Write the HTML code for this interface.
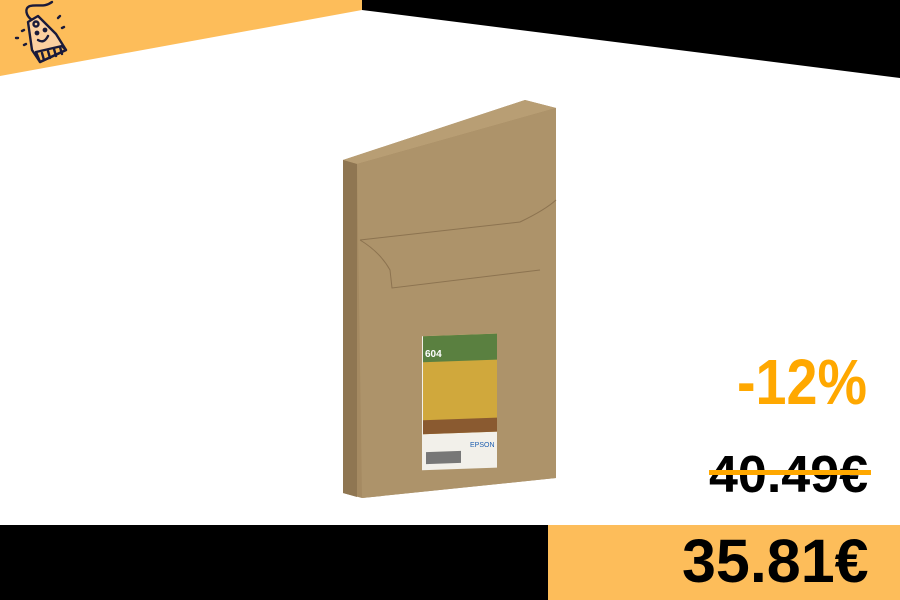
<!DOCTYPE html>
<html><head><style>
body{margin:0;width:900px;height:600px;overflow:hidden;background:#fff;position:relative;font-family:"Liberation Sans",sans-serif}
.t{position:absolute;font-weight:bold;white-space:nowrap;line-height:1;transform-origin:0 0}
</style></head><body>
<svg width="900" height="600" style="position:absolute;left:0;top:0">
<polygon points="0,0 362,0 362,10 0,76" fill="#fdbd5a"/>
<polygon points="362,0 900,0 900,78 362,10" fill="#000"/>
<rect x="0" y="525" width="548" height="75" fill="#000"/>
<rect x="548" y="525" width="352" height="75" fill="#fdbd5a"/>
<g fill="none" stroke="#1a1a3a" stroke-width="2.4" stroke-linecap="round" stroke-linejoin="round">
<path d="M52,2 C44,8 38,4 30,6 C24,8 26,16 32,20"/>
<path d="M28,22 L38,16 L56,34 L66,50 L40,62 L32,50 Z" fill="#fcd0a0"/>
<path d="M36,52 L62,46 L66,50 L40,62 Z" fill="#fdbd5a"/>
<path d="M42,53 L44,60 M48,51 L50,58 M54,49 L56,56 M60,47 L62,54"/>
<circle cx="36" cy="24" r="2.5"/>
<circle cx="37" cy="33" r="1.2" fill="#1a1a3a"/>
<circle cx="45" cy="30" r="1.2" fill="#1a1a3a"/>
<path d="M38,40 Q44,44 48,36"/>
<path d="M24,30 L22,31 M26,44 L24,45 M58,18 L60,16 M62,28 L64,27 M18,38 L16,38"/>
</g>
<polygon points="343,160 525,100 556,108 556,478 362,498 343,493" fill="#a58a62"/>
<polygon points="343,160 525,100 556,108 357,164" fill="#b89e74"/>
<polygon points="343,160 357,164 357,497 343,493" fill="#8f7652"/>
<polygon points="357,164 556,108 556,478 362,498" fill="#ad936a"/>
<path d="M360,240 L520,222 Q545,210 556,200 M360,240 Q380,252 390,270 L392,288 L540,270" fill="none" stroke="#8c7350" stroke-width="1"/>
<g transform="translate(0,15) skewY(-2)">
<rect x="422" y="336" width="75" height="134" fill="#f2f0ea"/>
<rect x="423" y="336" width="74" height="98" fill="#d0a83c"/>
<rect x="423" y="336" width="74" height="26" fill="#5a8040"/>
<rect x="423" y="420" width="74" height="14" fill="#8a5a30"/>
<rect x="426" y="452" width="35" height="12" fill="#777"/>
</g>
<text x="470" y="447" font-size="7" fill="#1f5fb0" font-family="Liberation Sans">EPSON</text>
<text x="425" y="357" font-size="10" font-weight="bold" fill="#fff" font-family="Liberation Sans">604</text>
</svg>
<div class="t" style="left:737px;top:350px;font-size:64px;color:#ffa800;transform:scaleX(0.87)">-12%</div>
<div class="t" style="left:709px;top:449px;font-size:52px;color:#000">40.49€</div>
<div style="position:absolute;left:709px;top:470px;width:162px;height:5px;background:#ffa800"></div>
<div class="t" style="left:682px;top:531px;font-size:61px;color:#000">35.81€</div>
</body></html>
